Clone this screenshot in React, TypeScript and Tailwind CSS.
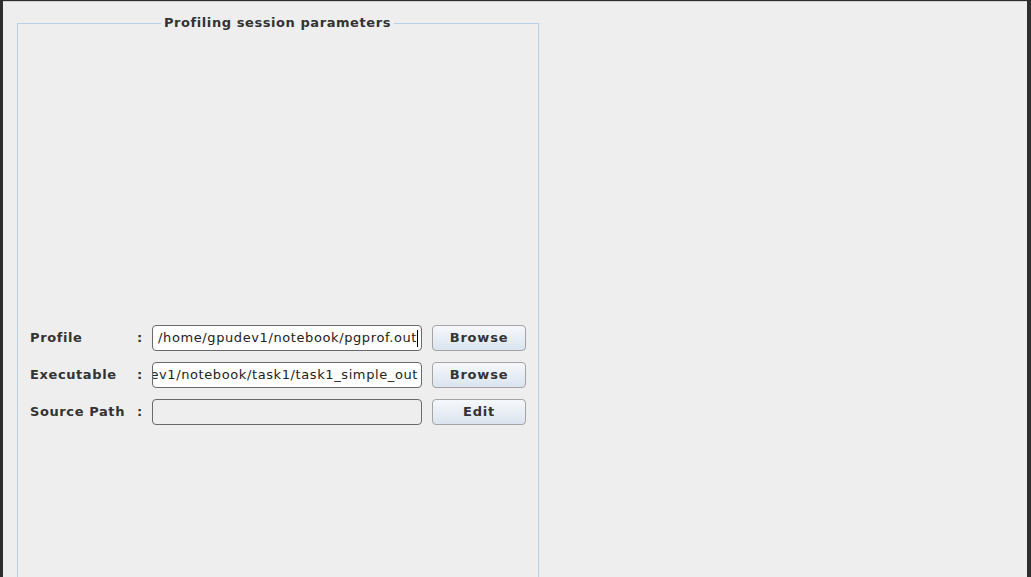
import { FC } from 'react'

interface rowProps {
  label: string
  value: string
  button: string
  editable?: boolean
  caret?: boolean
}

const rows: rowProps[] = [
  { label: 'Profile', value: '/home/gpudev1/notebook/pgprof.out', button: 'Browse', editable: true, caret: true },
  { label: 'Executable', value: '/home/gpudev1/notebook/task1/task1_simple_out', button: 'Browse', editable: true },
  { label: 'Source Path', value: '', button: 'Edit' },
]

const ParamRow: FC<rowProps> = ({ label, value, button, editable, caret }) => {
  return (
    <div className="flex items-center h-[26px]">
      <span className="w-[107px] font-bold text-[13px] tracking-[0.6px] text-[#333333]">{label}</span>
      <span className="w-[15px] font-bold text-[13px] text-[#333333]">:</span>
      <div
        className={`w-[270px] h-[26px] rounded-[4px] border border-[#6a6a6a] flex items-center justify-end overflow-hidden pr-[3px] ${
          editable ? 'bg-white' : 'bg-[#eeeeee]'
        }`}
      >
        <span className="shrink-0 whitespace-nowrap text-[13px] tracking-[0.6px] text-[#222222]">{value}</span>
        {caret && <span className="shrink-0 w-px h-[17px] bg-black"></span>}
      </div>
      <button className="ml-[10px] w-[94px] h-[26px] rounded-[4px] border border-[#a4a4a4] bg-gradient-to-b from-[#f6f8fb] to-[#dae4ef] font-bold text-[13px] text-[#333333] tracking-[0.8px]">
        {button}
      </button>
    </div>
  )
}

const App: FC = () => {
  return (
    <div
      className="w-[1031px] h-[577px] overflow-hidden bg-[#2e2e2e] pt-px pl-[3px] pr-[4px]"
      style={{ fontFamily: '"DejaVu Sans", sans-serif' }}
    >
      <div className="h-full bg-[#eeeeee] border-t border-[#cfcfcf] overflow-hidden">
        <fieldset className="ml-[14px] mt-[13px] w-[522px] h-[620px] border border-[#b9d0e6] px-[12px]">
          <legend className="ml-[131px] px-[3px] font-bold text-[13px] tracking-[0.57px] text-[#333333] leading-[16px]">
            Profiling session parameters
          </legend>
          <div className="pt-[294px] flex flex-col gap-[11px]">
            {rows.map((r) => (
              <ParamRow key={r.label} {...r} />
            ))}
          </div>
        </fieldset>
      </div>
    </div>
  )
}

export default App
